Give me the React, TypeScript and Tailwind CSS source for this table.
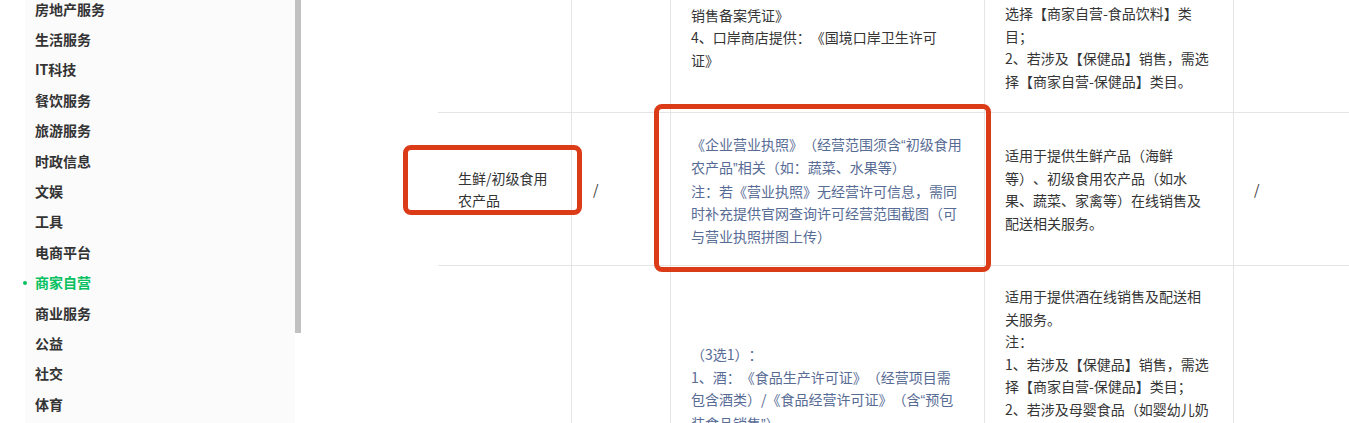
import React from "react";

const navItems = [
  "房地产服务",
  "生活服务",
  "IT科技",
  "餐饮服务",
  "旅游服务",
  "时政信息",
  "文娱",
  "工具",
  "电商平台",
  "商家自营",
  "商业服务",
  "公益",
  "社交",
  "体育",
];

function renderLine(l: string) {
  const parts = l.split(/([“”])/);
  return parts.map((p, i) =>
    p === "“" || p === "”" ? (
      <span key={i} className="font-['Liberation_Sans',sans-serif]">
        {p}
      </span>
    ) : (
      <React.Fragment key={i}>{p}</React.Fragment>
    )
  );
}

function Lines({ lines, className = "" }: { lines: string[]; className?: string }) {
  return (
    <div className={"text-[14px] leading-[22.5px] " + className}>
      {lines.map((l, i) => (
        <div key={i} className="whitespace-nowrap">
          {renderLine(l)}
        </div>
      ))}
    </div>
  );
}

export default function App() {
  const font = { fontFamily: '"Noto Sans CJK SC", "Noto Sans", sans-serif' };
  return (
    <div
      className="relative flex h-[423px] w-[1349px] overflow-hidden bg-white text-[#353535] [text-spacing-trim:space-all]"
      style={font}
    >
      {/* left white strip */}
      <div className="w-[25px] shrink-0 bg-white" />
      {/* sidebar */}
      <div className="w-[270px] shrink-0 bg-[#fbfbfb]">
        <ul className="-mt-[6px] pl-[10px]">
          {navItems.map((n) => {
            const active = n === "商家自营";
            return (
              <li
                key={n}
                className={
                  "relative flex h-[30.4px] items-center text-[14px] font-bold " +
                  (active ? "text-[#07c160]" : "text-[#333333]")
                }
              >
                {active && (
                  <span className="absolute left-[-12px] top-1/2 h-[4px] w-[4px] -translate-y-1/2 rounded-full bg-[#07c160]" />
                )}
                {n}
              </li>
            );
          })}
        </ul>
      </div>
      {/* scrollbar */}
      <div className="w-[6px] shrink-0">
        <div className="h-[333px] w-[6px] bg-[#c1c1c1]" />
      </div>
      {/* main */}
      <div className="flex-1 pl-[137px]">
        <div className="text-[14px]">
          {/* row 1 */}
          <div className="grid h-[113px] grid-cols-[133px_99px_314px_249px_1fr] border-b border-[#e5e5e5]">
            <div />
            <div className="border-l border-[#e5e5e5]" />
            <div className="flex items-end border-l border-[#e5e5e5] pb-[41px] pl-[20px]">
              <Lines lines={["销售备案凭证》", "4、口岸商店提供：《国境口岸卫生许可", "证》"]} />
            </div>
            <div className="flex items-end border-l border-[#e5e5e5] pb-[20px] pl-[20px]">
              <Lines
                lines={[
                  "选择【商家自营-食品饮料】类",
                  "目；",
                  "2、若涉及【保健品】销售，需选",
                  "择【商家自营-保健品】类目。",
                ]}
              />
            </div>
            <div className="border-l border-[#e5e5e5]" />
          </div>
          {/* row 2 */}
          <div className="grid h-[153px] grid-cols-[133px_99px_314px_249px_1fr] border-b border-[#e5e5e5]">
            <div className="flex items-center pl-[20px]">
              <Lines lines={["生鲜/初级食用", "农产品"]} className="text-[#333333]" />
            </div>
            <div className="flex items-center border-l border-[#e5e5e5] pl-[21px]">/</div>
            <div className="flex items-center border-l border-[#e5e5e5] pl-[20px] pt-[2px]">
              <Lines
                className="text-[#576b95]"
                lines={[
                  "《企业营业执照》（经营范围须含“初级食用",
                  "农产品”相关（如：蔬菜、水果等）",
                  "注：若《营业执照》无经营许可信息，需同",
                  "时补充提供官网查询许可经营范围截图（可",
                  "与营业执照拼图上传）",
                ]}
              />
            </div>
            <div className="flex items-center border-l border-[#e5e5e5] pl-[20px]">
              <Lines
                lines={[
                  "适用于提供生鲜产品（海鲜",
                  "等）、初级食用农产品（如水",
                  "果、蔬菜、家禽等）在线销售及",
                  "配送相关服务。",
                ]}
              />
            </div>
            <div className="flex items-center border-l border-[#e5e5e5] pl-[20px]">/</div>
          </div>
          {/* row 3 */}
          <div className="grid h-[170px] grid-cols-[133px_99px_314px_249px_1fr]">
            <div />
            <div className="border-l border-[#e5e5e5]" />
            <div className="border-l border-[#e5e5e5] pl-[20px] pt-[77px]">
              <Lines
                className="text-[#576b95]"
                lines={[
                  "（3选1）：",
                  "1、酒：《食品生产许可证》（经营项目需",
                  "包含酒类）/《食品经营许可证》（含“预包",
                  "装食品销售”）",
                ]}
              />
            </div>
            <div className="border-l border-[#e5e5e5] pl-[20px] pt-[19px]">
              <Lines
                lines={[
                  "适用于提供酒在线销售及配送相",
                  "关服务。",
                  "注：",
                  "1、若涉及【保健品】销售，需选",
                  "择【商家自营-保健品】类目；",
                  "2、若涉及母婴食品（如婴幼儿奶",
                ]}
              />
            </div>
            <div className="border-l border-[#e5e5e5]" />
          </div>
        </div>
      </div>
      {/* annotation boxes */}
      <div className="pointer-events-none absolute left-[403px] top-[145px] h-[70px] w-[179px] rounded-[8px] border-[5px] border-[#db3b17]" />
      <div className="pointer-events-none absolute left-[654px] top-[104px] h-[168px] w-[337px] rounded-[8px] border-[5px] border-[#db3b17]" />
    </div>
  );
}
